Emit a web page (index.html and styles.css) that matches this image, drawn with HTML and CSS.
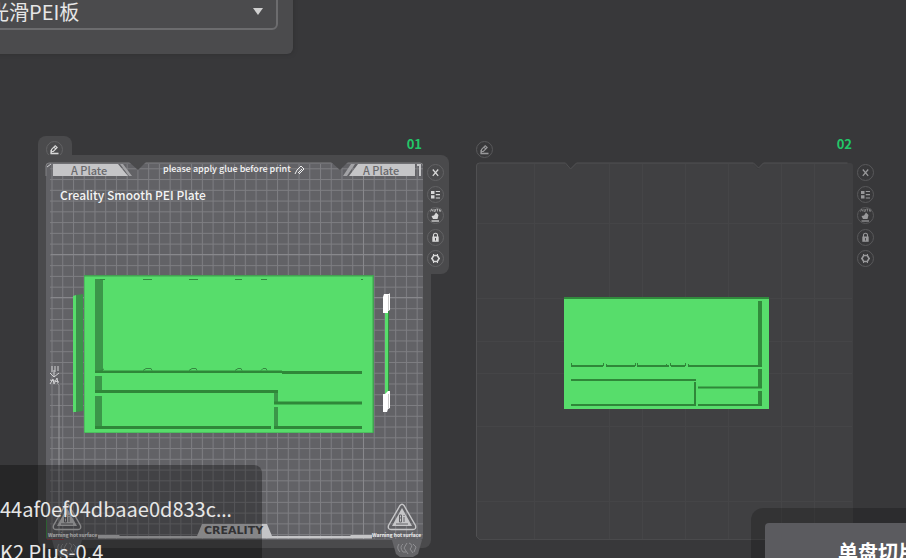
FILE: index.html
```html
<!DOCTYPE html>
<html lang="zh-CN">
<head>
<meta charset="utf-8">
<title>Plate view</title>
<link rel="stylesheet" href="styles.css">
</head>
<body>
<svg class="defs" aria-hidden="true">
  <symbol id="i-edit" viewBox="0 0 17 17"><path d="M4.500 12.500h8" stroke-width="1.600"/><path d="M5.500 10.500V8.500L9.200 4.700l2 1.800L7.300 10.500z M8 6.200l2 2" stroke-width="1.100"/><path d="M5.200 9v3.500" stroke-width="1.500"/></symbol>
  <symbol id="i-close" viewBox="0 0 17 17"><path d="M5.800 5.500l5.400 6.300M11.200 5.500l-5.400 6.300" stroke-width="1.300"/></symbol>
  <symbol id="i-list" viewBox="0 0 17 17"><path d="M4 5h3.500v3H4zM4 9.200h3.500v3.300H4z" fill="currentColor" stroke="none"/><path d="M8.800 5.500H13M8.800 8.700H13M8.800 12H13" stroke-width="1.200"/></symbol>
  <symbol id="i-auto" viewBox="0 0 17 17"><path d="M3.500 4.500L4.700 2l1.200 2.500M7 2v2.300h1.400V2M9.300 2h2.200M10.400 2v2.500M12.500 2.200h1.300v2h-1.300z" stroke-width=".7"/><path d="M4.500 9l2.500-.5L9 5.500l2.500 2.500L10.500 12H6z" fill="currentColor" stroke="none"/><path d="M4.500 14h7.500" stroke-width="1.300"/></symbol>
  <symbol id="i-lock" viewBox="0 0 17 17"><path d="M5.300 7.500h6.400v5.300H5.300z" fill="currentColor" stroke="none"/><path d="M6.500 8V6.200a2 2 0 0 1 4 0V8" stroke-width="1.100"/><path class="hole" d="M8.500 9v2.500"/></symbol>
  <symbol id="i-gear" viewBox="0 0 17 17"><path d="M6.700 5.500h3.600l1.800 3-1.800 3H6.700l-1.800-3z" stroke-width="1.600"/><path d="M6.500 4v2M10.500 4v2M6.500 11v2M10.500 11v2M4 8.500h1.500M11.500 8.500H13"/></symbol>
  <symbol id="warn" viewBox="0 0 30 28"><path d="M13 2.500Q15 0 17 2.500L28.500 22.500Q29.500 26.500 26 26.500H4Q.5 26.500 1.500 22.500z" fill="none" stroke="#c6c6c8" stroke-width="1.400"/><path d="M15 5l10 18H5z" fill="#c6c6c8"/><path d="M12.500 12v7M12.500 12h2v3h-2M14.500 15v4h-2M17 14v5M17 12v1M9 21h12" fill="none" stroke="#626266"/></symbol>
  <symbol id="badge" viewBox="0 0 32 18"><path d="M1 0h30l-4 14-5 3H9l-4-3z" fill="#646467"/><path d="M8 4q-3 4 1 8M12 4q-4 3 0 8h3M16 3l-3 5 4 6M18 3q5 2 1 6l3 4M22 4l3 3-2 5" fill="none" stroke="#909093"/></symbol>
</svg>

<main class="viewport">
  <section class="plate plate-active" aria-label="Plate 01">
    <header class="plate-head">
      <div class="tab"><button class="tool" aria-label="Edit plate name"><svg><use href="#i-edit"/></svg></button></div>
      <span class="number">01</span>
    </header>
    <div class="plate-body">
      <div class="deck">
        <svg class="bed" viewBox="46 163 377 377" role="img" aria-label="Build plate with model">
          <defs>
            <pattern id="grid" x="51.500" y="168.300" width="10.740" height="10.760" patternUnits="userSpaceOnUse"><path d="M.5 0v10.760M0 .5h10.740" stroke="#7e7e82"/></pattern>
          </defs>
          <rect x="46" y="163" width="377" height="377" rx="3" fill="#626266"/>
          <rect x="50" y="164" width="373" height="375" fill="url(#grid)"/>
          <path d="M363.500 164v375M51 254.500h371M51 297.500h371" stroke="#88888c"/>
          <path d="M46 176V166q0-3 3-3h371q3 0 3 3" fill="none" stroke="#808083"/>
          <path d="M129 162h17l-8 8zM331 162h17l-8 8z" fill="#4a4a4c"/>
          <path d="M53 164h65l10 12H53zM349 176l9-12h57v12zM417 164h4v12h-2v-10h-2z" fill="#c5c5c7"/>
          <path d="M120 164h3l9 12h-3zM343 176l8-12h4l-8 12z" fill="#a2a2a5"/>
          <path d="M47 167l4-3" stroke="#d0d0d2"/>
          <text class="plate-tag" x="71" y="175">A Plate</text>
          <text class="plate-tag" x="363" y="175">A Plate</text>
          <text class="hint" x="163" y="172">please apply glue before print</text>
          <path d="M295 174l2-4 4-4 3 3-5 5M298 173l4-4" fill="none" stroke="#eee"/>
          <text class="plate-name" x="60" y="200">Creality Smooth PEI Plate</text>
          <path d="M52 366v6M55 366v6M58 366v5M50 373l4 4 5-4M54 370v7M50 384l3-5 1 5 3-6 1 5M50 380l9 2" fill="none" stroke="#d0d0d2"/>
          <path d="M57 383l2 2v150" fill="none" stroke="#98989b"/>

          <path d="M76 295l7-1v117l-7 1z" fill="#3b9349"/><path d="M73 296l3-1v117h-3z" fill="#57dd6b"/>
          <path d="M84 275h290v158H84z" fill="#43a052"/><path d="M84.500 276.500h288v156h-288z" fill="#57dd6b"/>
          <path d="M95 279h8v94h-8zM95 376h7v17h-7zM95 396h7v33h-7zM274 391h4v13h-4zM274 407h4v22h-4z" fill="#3b9749"/>
          <path d="M95 370.500h187v2.500H95zM282 371h80v3h-80zM95 390h183v3H95zM274 401.500h88v3h-88zM95 426h176v3H95zM274 426h88v3h-88z" fill="#2f8739"/>
          <path d="M100 279.500h5M143 279.500h9M189 279.500h9M235 279.500h7M261 279.500h6M361 279.500h2M143 370.500l3-2h5l1 2M189 370.500l3-2h4l1 2M235 370.500l3-2h3l1 2M261 370.500l2-2h3l1 2M100 371l4-2" fill="none" stroke="#348a40"/>
          <path d="M385 310h3v86h-3z" fill="#57dd6b"/><path d="M388 310h1v85h-1z" fill="#348a40"/>
          <path d="M383 297l1-3h5l1-1v17l-2 1v2h-5zM383 394h2l3-3h2v17l-2 1-1 3h-4z" fill="#fff"/><path d="M388.500 295v15M388.500 394v14" stroke="#aaa" stroke-width=".6"/>

          <path d="M98 536h274v2.500H98zM98 535h21l3 3H98zM348 538l3-3h21v3z" fill="#c5c5c7"/>
          <path d="M197 536l5-12h65l5 12z" fill="#c5c5c7"/>
          <text class="brand" x="204" y="534">CREALITY</text>
          <use href="#badge" x="391" y="540" width="32" height="18"/><use href="#badge" x="51" y="540" width="32" height="18"/>
          <use href="#warn" x="387" y="503" width="30" height="28"/><use href="#warn" x="52" y="503" width="30" height="28"/>
          <text class="caution" x="372" y="537">Warning hot surface</text>
          <text class="caution" x="48" y="537">Warning hot surface</text>
          <path d="M46.500 520v18" stroke="#43904b"/><path d="M47 539.500h17" stroke="#8d4046"/>
        </svg>
      </div>
      <div class="tools">
        <button class="tool" aria-label="Remove plate"><svg><use href="#i-close"/></svg></button>
        <button class="tool" aria-label="Arrange"><svg><use href="#i-list"/></svg></button>
        <button class="tool" aria-label="Auto orient"><svg><use href="#i-auto"/></svg></button>
        <button class="tool" aria-label="Lock plate"><svg><use href="#i-lock"/></svg></button>
        <button class="tool" aria-label="Plate settings"><svg><use href="#i-gear"/></svg></button>
      </div>
    </div>
  </section>

  <section class="plate plate-idle" aria-label="Plate 02">
    <header class="plate-head">
      <div class="tab"><button class="tool" aria-label="Edit plate name"><svg><use href="#i-edit"/></svg></button></div>
      <span class="number">02</span>
    </header>
    <div class="plate-body">
      <div class="deck">
        <svg class="bed" viewBox="476 163 377 377" role="img" aria-label="Build plate with model">
          <path d="M479 163h86l5 6 6-6h177l5 6 5-6h87q3 0 3 3v374H480l-4-4V166q0-3 3-3z" fill="#404042"/>
          <path d="M534.500 164v375M609.500 164v375M642.500 164v375M685.500 164v375M728.500 164v375M781.500 164v375M814.500 164v375M477 223.500h375M477 298.500h375M477 341.500h375M477 373.500h375M477 426.500h375M477 501.500h375" stroke="#454547"/>
          <path d="M476.500 536V166q0-3 3-3h86l5 6 6-6h177l5 5 5-5h84" fill="none" stroke="#505052"/>
          <path d="M476 536l4 4M480 539.500h372" stroke="#4a4a4c"/>
          <path d="M564 297h205v3H564z" fill="#318a3d"/><path d="M564 299h205v110H564z" fill="#57dd6b"/>
          <path d="M758 301h4v64h-4zM758 369h4v19h-4zM758 391h4v15h-4z" fill="#328b3c"/>
          <path d="M571 365h191v2H571zM571 379h125v2H571zM694 382h2v24h-2zM698 386.500h64v2h-64zM571 404h125v2H571zM698 404h64v2h-64z" fill="#2f8739"/>
          <path d="M603 366h3M635 366h2M669 366h2M685 366h3" stroke="#57dd6b" stroke-width="2"/>
          <path d="M571.500 363v2M603.500 363v3M606.500 364v2M635.500 363v3M637.500 363v3M666.500 364v3M670.500 363v3M685.500 363v3M688.500 364v3" stroke="#2f8739"/>
        </svg>
      </div>
      <div class="tools">
        <button class="tool" aria-label="Remove plate"><svg><use href="#i-close"/></svg></button>
        <button class="tool" aria-label="Arrange"><svg><use href="#i-list"/></svg></button>
        <button class="tool" aria-label="Auto orient"><svg><use href="#i-auto"/></svg></button>
        <button class="tool" aria-label="Lock plate"><svg><use href="#i-lock"/></svg></button>
        <button class="tool" aria-label="Plate settings"><svg><use href="#i-gear"/></svg></button>
      </div>
    </div>
  </section>

  <div class="settings-panel">
    <div class="select-box">
      <select aria-label="打印平台"><option>光滑PEI板</option></select>
      <svg class="caret" viewBox="0 0 10 7" aria-hidden="true"><path d="M0 0h10L5 7z"/></svg>
    </div>
  </div>

  <aside class="info-panel">
    <p>44af0ef04dbaae0d833c<span class="more">…</span></p>
    <p>K2 Plus-0.4</p>
  </aside>

  <div class="action-panel">
    <button class="slice">单盘切片</button>
  </div>
</main>
</body>
</html>
```
FILE: styles.css
```css
* { box-sizing: border-box; }

body {
  margin: 0;
  background: #38383a;
  color: #e6e6e6;
  font-family: "Noto Sans CJK SC", "Noto Sans", sans-serif;
}

button, select { font: inherit; color: inherit; }
.defs { position: absolute; width: 0; height: 0; }

.viewport {
  position: relative;
  height: 100vh;
  overflow: hidden;
}

/* Plates sit freely on the canvas */
.plate { position: absolute; top: 136px; }
.plate-active { left: 38px; --frame: #4a4a4c; --icon: #d8d8d8; --ring: #626264; }
.plate-idle { left: 468px; --frame: transparent; --icon: #98989a; --ring: #58585a; }

.plate-head {
  display: flex;
  justify-content: space-between;
  height: 19px;
  padding-right: 27px;
}

.tab {
  width: 34px;
  padding: 5px 8px 0;
  border-radius: 8px 8px 0 0;
  background: var(--frame);
}

.number {
  color: #22c768;
  font-size: 13px;
  font-weight: 700;
  line-height: 16px;
}

.plate-body { display: flex; align-items: flex-start; }

.deck {
  padding: 8px;
  border-radius: 0 0 8px 8px;
  background: var(--frame);
}

.bed { display: block; width: 377px; height: 377px; overflow: visible; }

.tools {
  display: flex;
  flex-direction: column;
  justify-content: space-between;
  height: 119px;
  margin-left: -8px;
  padding: 9px 5px 7px 4px;
  border-radius: 0 8px 8px 0;
  background: var(--frame);
}

.tool {
  display: block;
  width: 17px;
  height: 17px;
  padding: 0;
  border: 0;
  border-radius: 50%;
  outline: 1px solid var(--ring);
  outline-offset: -1px;
  background: none;
  color: var(--icon);
}

.tool svg {
  display: block;
  width: 17px;
  height: 17px;
  fill: none;
  stroke: currentColor;
}

.hole { stroke: #4a4a4c; }

.plate-tag { font-size: 11px; font-weight: 500; fill: #69696c; }
.hint { font-size: 9px; font-weight: 500; fill: #f4f4f4; }
.plate-name { font-size: 12px; font-weight: 500; fill: #f4f4f4; }
.brand { font: 700 11px "DejaVu Sans", sans-serif; fill: #4b4b4e; }
.caution { font-size: 5px; font-weight: 700; fill: #f0f0f0; }

.settings-panel {
  position: absolute;
  top: -20px;
  left: -40px;
  width: 333px;
  padding: 10px 15px 24px;
  border-radius: 0 0 6px 6px;
  background: #4b4b4d;
  box-shadow: 0 0 4px #2e2e30;
}

.select-box { position: relative; }

.select-box select {
  display: block;
  width: 100%;
  height: 40px;
  padding: 2px 12px 0;
  appearance: none;
  border: 2px solid #6c6c6e;
  border-radius: 6px;
  background: transparent;
  font-size: 20px;
}

.caret {
  position: absolute;
  top: 18px;
  right: 15px;
  width: 10px;
  height: 7px;
  fill: #d0d0d0;
  pointer-events: none;
}

.info-panel {
  position: absolute;
  top: 465px;
  left: -10px;
  width: 272px;
  padding: 27px 10px;
  border-radius: 8px;
  background: rgba(0, 0, 0, .32);
}

.info-panel p {
  margin: 0 0 8px;
  font-size: 20px;
  line-height: 34px;
  white-space: nowrap;
}

.more { font-family: "Noto Sans", sans-serif; }

.action-panel {
  position: absolute;
  top: 508px;
  right: -99px;
  width: 254px;
  padding: 15px 14px;
  border-radius: 12px;
  background: rgba(0, 0, 0, .2);
}

.slice {
  display: block;
  width: 100%;
  height: 56px;
  border: 0;
  border-radius: 4px;
  background: #5b5b5f;
  color: #fff;
  font-size: 20px;
  font-weight: 700;
}
```
